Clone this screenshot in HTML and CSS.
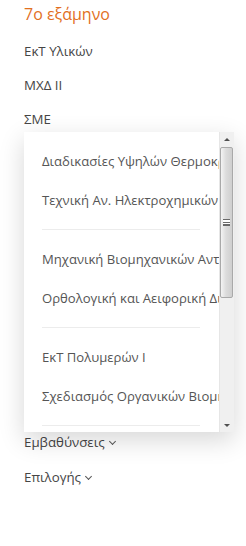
FILE: index.html
```html
<!DOCTYPE html>
<html lang="el">
<head>
    <meta charset="UTF-8">
    <meta name="viewport" content="width=device-width, initial-scale=1.0">
    <title>7ο εξάμηνο</title>
    <link rel="stylesheet" href="styles.css">
</head>
<body>
    <div class="semester">
        <h2 class="semester-title">7ο εξάμηνο</h2>
        <ul class="course-list">
            <li>ΕκΤ Υλικών</li>
            <li>ΜΧΔ ΙΙ</li>
            <li class="has-menu">
                ΣΜΕ
                <div class="dropdown">
                    <div class="dropdown-list">
                        <a href="#">Διαδικασίες Υψηλών Θερμοκρασιών</a>
                        <a href="#">Τεχνική Αν. Ηλεκτροχημικών Διεργασιών</a>
                        <hr>
                        <a href="#">Μηχανική Βιομηχανικών Αντιδραστήρων</a>
                        <a href="#">Ορθολογική και Αειφορική Διαχείριση</a>
                        <hr>
                        <a href="#">ΕκΤ Πολυμερών Ι</a>
                        <a href="#">Σχεδιασμός Οργανικών Βιομηχανιών</a>
                        <hr>
                    </div>
                    <div class="scrollbar">
                        <span class="arrow up"></span>
                        <span class="thumb"><span class="grip"></span></span>
                        <span class="track"></span>
                        <span class="arrow down"></span>
                    </div>
                </div>
            </li>
            <li class="toggle">Εμβαθύνσεις <span class="chevron"></span></li>
            <li class="toggle">Επιλογής <span class="chevron"></span></li>
        </ul>
    </div>
</body>
</html>
```

FILE: styles.css
```css
* {
    margin: 0;
    padding: 0;
    box-sizing: border-box;
    font-family: 'Open Sans', 'Noto Sans', sans-serif;
}

body {
    background: white;
    padding: 0 12px 0 24px;
}

.semester-title {
    color: #e2701f;
    font-size: 16px;
    font-weight: 400;
    line-height: 28px;
}

.course-list {
    list-style: none;
    margin-top: 6px;
}

.course-list li {
    color: #454545;
    font-size: 13.3px;
    line-height: 34px;
}

.has-menu {
    position: relative;
}

.dropdown {
    display: flex;
    width: 210px;
    height: 300px;
    margin: -4px 0 -7px;
    background: white;
    box-shadow: 0 8px 24px rgba(0, 0, 0, 0.16);
}

.dropdown-list {
    flex: 1;
    overflow: hidden;
    padding: 10px 0 0 18px;
}

.dropdown-list a {
    display: block;
    color: #555;
    text-decoration: none;
    white-space: nowrap;
    font-size: 13.1px;
    line-height: 39px;
}

.dropdown-list hr {
    border: none;
    border-top: 1px solid #ececec;
    width: 158px;
    margin: 9px 0 10px;
}

.scrollbar {
    width: 15px;
    display: flex;
    flex-direction: column;
    background: #f0f0f0;
    border-left: 1px solid #e6e6e6;
}

.arrow {
    height: 15px;
    position: relative;
}

.arrow::after {
    content: '';
    position: absolute;
    left: 4px;
    border-left: 3px solid transparent;
    border-right: 3px solid transparent;
}

.arrow.up::after {
    top: 6px;
    border-bottom: 3px solid #505050;
}

.arrow.down::after {
    top: 7px;
    border-top: 3px solid #505050;
}

.thumb {
    height: 151px;
    margin: 0 1px 0 0;
    border: 1px solid #a9a9a9;
    border-radius: 2px;
    background: linear-gradient(to right, #f4f4f4, #dcdcdc 45%, #cfcfcf);
    display: flex;
    align-items: center;
    justify-content: center;
}

.grip {
    width: 7px;
    height: 7px;
    border-top: 1px solid #6a6a6a;
    border-bottom: 1px solid #6a6a6a;
    background: linear-gradient(#fff 0 2px, #6a6a6a 2px 3px, #fff 3px 4px, #6a6a6a 4px 5px, transparent 5px);
}

.track {
    flex: 1;
}

.toggle {
    display: flex;
    align-items: center;
    gap: 5px;
}

.course-list li.toggle {
    line-height: 35px;
}

.chevron {
    width: 5px;
    height: 5px;
    border-right: 1.2px solid #555;
    border-bottom: 1.2px solid #555;
    transform: rotate(45deg);
    margin-top: -3px;
}
```
